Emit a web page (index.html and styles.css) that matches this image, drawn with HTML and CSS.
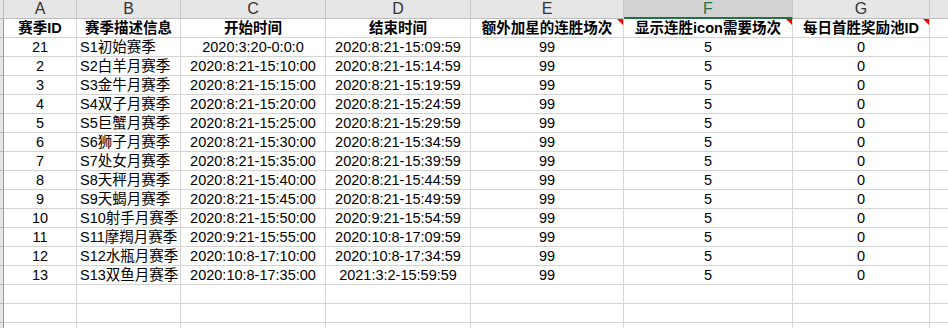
FILE: index.html
```html
<!DOCTYPE html>
<html lang="zh-CN">
<head>
<meta charset="utf-8">
<title>赛季配置</title>
<link rel="stylesheet" href="styles.css">
</head>
<body>
<div class="sheet">
  <div class="rh ch"></div>
  <div class="ch">A</div><div class="ch">B</div><div class="ch">C</div><div class="ch">D</div><div class="ch">E</div><div class="ch sel">F</div><div class="ch">G</div><div class="ch"></div>

  <div class="rh"></div>
  <div class="c hd">赛季ID</div><div class="c hd">赛季描述信息</div><div class="c hd">开始时间</div><div class="c hd">结束时间</div><div class="c hd note">额外加星的连胜场次</div><div class="c hd note">显示连胜icon需要场次</div><div class="c hd note">每日首胜奖励池ID</div><div class="c"></div>

  <div class="rh"></div><div class="c">21</div><div class="c l">S1初始赛季</div><div class="c">2020:3:20-0:0:0</div><div class="c">2020:8:21-15:09:59</div><div class="c">99</div><div class="c">5</div><div class="c">0</div><div class="c"></div>
  <div class="rh"></div><div class="c">2</div><div class="c l">S2白羊月赛季</div><div class="c">2020:8:21-15:10:00</div><div class="c">2020:8:21-15:14:59</div><div class="c">99</div><div class="c">5</div><div class="c">0</div><div class="c"></div>
  <div class="rh"></div><div class="c">3</div><div class="c l">S3金牛月赛季</div><div class="c">2020:8:21-15:15:00</div><div class="c">2020:8:21-15:19:59</div><div class="c">99</div><div class="c">5</div><div class="c">0</div><div class="c"></div>
  <div class="rh"></div><div class="c">4</div><div class="c l">S4双子月赛季</div><div class="c">2020:8:21-15:20:00</div><div class="c">2020:8:21-15:24:59</div><div class="c">99</div><div class="c">5</div><div class="c">0</div><div class="c"></div>
  <div class="rh"></div><div class="c">5</div><div class="c l">S5巨蟹月赛季</div><div class="c">2020:8:21-15:25:00</div><div class="c">2020:8:21-15:29:59</div><div class="c">99</div><div class="c">5</div><div class="c">0</div><div class="c"></div>
  <div class="rh"></div><div class="c">6</div><div class="c l">S6狮子月赛季</div><div class="c">2020:8:21-15:30:00</div><div class="c">2020:8:21-15:34:59</div><div class="c">99</div><div class="c">5</div><div class="c">0</div><div class="c"></div>
  <div class="rh"></div><div class="c">7</div><div class="c l">S7处女月赛季</div><div class="c">2020:8:21-15:35:00</div><div class="c">2020:8:21-15:39:59</div><div class="c">99</div><div class="c">5</div><div class="c">0</div><div class="c"></div>
  <div class="rh"></div><div class="c">8</div><div class="c l">S8天秤月赛季</div><div class="c">2020:8:21-15:40:00</div><div class="c">2020:8:21-15:44:59</div><div class="c">99</div><div class="c">5</div><div class="c">0</div><div class="c"></div>
  <div class="rh"></div><div class="c">9</div><div class="c l">S9天蝎月赛季</div><div class="c">2020:8:21-15:45:00</div><div class="c">2020:8:21-15:49:59</div><div class="c">99</div><div class="c">5</div><div class="c">0</div><div class="c"></div>
  <div class="rh"></div><div class="c">10</div><div class="c l">S10射手月赛季</div><div class="c">2020:8:21-15:50:00</div><div class="c">2020:9:21-15:54:59</div><div class="c">99</div><div class="c">5</div><div class="c">0</div><div class="c"></div>
  <div class="rh"></div><div class="c">11</div><div class="c l">S11摩羯月赛季</div><div class="c">2020:9:21-15:55:00</div><div class="c">2020:10:8-17:09:59</div><div class="c">99</div><div class="c">5</div><div class="c">0</div><div class="c"></div>
  <div class="rh"></div><div class="c">12</div><div class="c l">S12水瓶月赛季</div><div class="c">2020:10:8-17:10:00</div><div class="c">2020:10:8-17:34:59</div><div class="c">99</div><div class="c">5</div><div class="c">0</div><div class="c"></div>
  <div class="rh"></div><div class="c">13</div><div class="c l">S13双鱼月赛季</div><div class="c">2020:10:8-17:35:00</div><div class="c">2021:3:2-15:59:59</div><div class="c">99</div><div class="c">5</div><div class="c">0</div><div class="c"></div>
  <div class="rh"></div><div class="c"></div><div class="c"></div><div class="c"></div><div class="c"></div><div class="c"></div><div class="c"></div><div class="c"></div><div class="c"></div>
  <div class="rh"></div><div class="c"></div><div class="c"></div><div class="c"></div><div class="c"></div><div class="c"></div><div class="c"></div><div class="c"></div><div class="c"></div>
  <div class="rh"></div><div class="c"></div><div class="c"></div><div class="c"></div><div class="c"></div><div class="c"></div><div class="c"></div><div class="c"></div><div class="c"></div>
</div>
</body>
</html>
```

FILE: styles.css
```css
html, body {
  margin: 0;
  padding: 0;
  background: #ffffff;
  overflow: hidden;
}
.sheet {
  display: grid;
  grid-template-columns: 4px 73px 104px 145px 145px 153px 169px 137px 60px;
  grid-template-rows: 19px;
  grid-auto-rows: 19px;
  font-family: "Liberation Sans", "Noto Sans CJK SC", sans-serif;
  font-size: 14.5px;
  color: #000000;
  width: 990px;
}
.sheet > div {
  box-sizing: border-box;
  white-space: nowrap;
  overflow: hidden;
}
.ch {
  background: #e6e6e6;
  border-right: 1px solid #c8c8c8;
  border-bottom: 1px solid #bdbdbd;
  color: #333333;
  text-align: center;
  line-height: 18px;
  font-size: 16px;
}
.ch.sel {
  background: #d2d2d2;
  color: #217346;
  border-bottom: 2px solid #217346;
  line-height: 17px;
}
.rh {
  background: #e6e6e6;
  border-right: 1px solid #9b9b9b;
  border-bottom: 1px solid #bdbdbd;
}
.rh.ch {
  border-right: 1px solid #bdbdbd;
}
.c {
  position: relative;
  border-right: 1px solid #d4d4d4;
  border-bottom: 1px solid #d4d4d4;
  text-align: center;
  line-height: 19px;
}
.c.l {
  text-align: left;
  padding-left: 3px;
}
.c.hd {
  font-weight: bold;
}
.c.note::after {
  content: "";
  position: absolute;
  top: 0;
  right: 0;
  width: 0;
  height: 0;
  border-top: 6px solid #ff0000;
  border-left: 6px solid transparent;
}
```
